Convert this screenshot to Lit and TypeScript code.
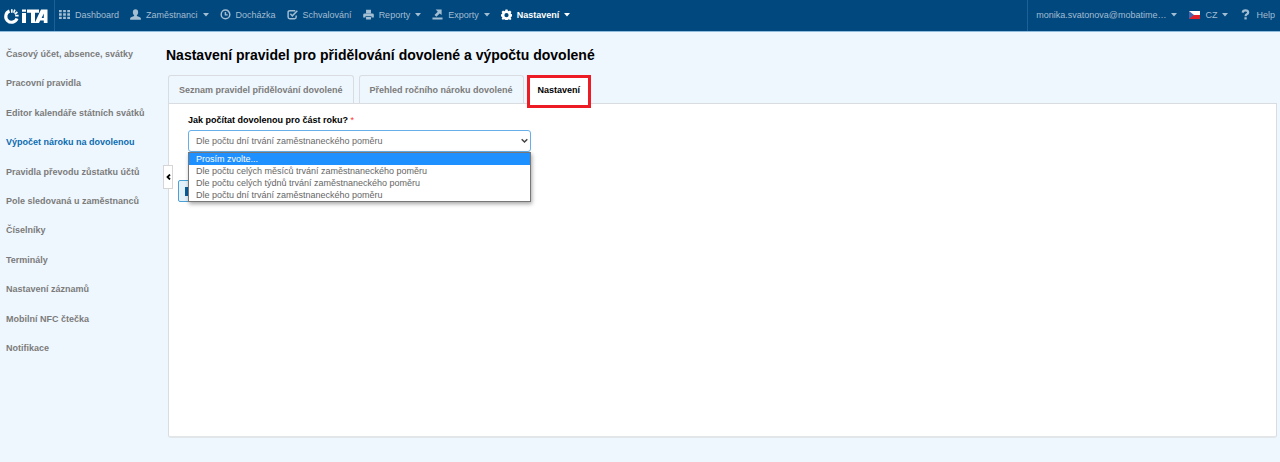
import { LitElement, html, svg, css } from "lit";
import { customElement, property, state } from "lit/decorators.js";
import { classMap } from "lit/directives/class-map.js";

const icons: Record<string, unknown> = {
  grid: svg`<path d="M0 1h3v2.6H0zM4.5 1h3v2.6h-3zM9 1h3v2.6H9zM0 4.7h3v2.6H0zM4.5 4.7h3v2.6h-3zM9 4.7h3v2.6H9zM0 8.4h3V11H0zM4.5 8.4h3V11h-3zM9 8.4h3V11H9z"/>`,
  user: svg`<path d="M6 .3c1.900 0 2.900 1.300 2.900 3.200 0 1.500-.6 2.700-1.400 3.300v.9c1.700.7 4.100 1.200 4.400 2.700V11.700H.1v-1.300c.3-1.500 2.700-2 4.400-2.700v-.9C3.700 6.200 3.100 5 3.100 3.500 3.100 1.600 4.100.3 6 .3z"/>`,
  clock: svg`<path fill="none" stroke="currentColor" stroke-width="1.600" d="M6 1.200a4.700 4.700 0 1 1 0 9.400 4.700 4.700 0 0 1 0-9.400zM5.900 3.200v3.200h2.500"/>`,
  check: svg`<path fill="none" stroke="currentColor" stroke-width="1.600" d="M9 1.800H3.200Q1.200 1.800 1.200 3.600v5.200q0 1.800 1.800 1.800h5.200q1.800 0 1.800-1.800V7M3.700 5.200l2.100 2.300L11.300 2"/>`,
  print: svg`<path d="M3.300.8h5.400v3.700H3.300zM1.800 5h8.400Q11.800 5 11.800 6.400v3H9.300V8H2.700v1.400H.2v-3Q.2 5 1.800 5zM3.300 8.600h5.400v2.800H3.300z"/>`,
  share: svg`<path d="M.5 9.300h11v2.200H.5zM4 .6h6.500v6L8.400 4.900 4.800 8.400 2.700 6.600 6.300 3z"/>`,
  gear: svg`<path fill-rule="evenodd" d="M4.900.5h2.200l.4 1.500 1 .4 1.300-.8 1.600 1.600-.8 1.300.4 1 1.300.4v2.200L11 8.500l-.4 1 .8 1.300-1.300 1.200-1.600-.8-1 .4-.4 1H4.900l-.4-1-1-.4-1.600.6L.7 10.600l.7-1.200-.4-1L0 8.100V5.900l1-.4.4-1-.8-1.300 1.600-1.600 1.300.8 1-.4zM6 4.400a2.300 2.300 0 1 0 0 4.600 2.300 2.300 0 0 0 0-4.600z"/>`,
  help: svg`<path fill="none" stroke="currentColor" stroke-width="2.400" d="M3 4Q3.200 1.600 6 1.600t2.900 2.100Q8.900 5 7.400 5.700 6.100 6.300 6.100 7.900"/><path d="M4.800 9h2.500v2.400H4.800z"/>`,
};

interface NavItem {
  icon: string;
  label: string;
  menu?: boolean;
  active?: boolean;
}

const NAV: NavItem[] = [
  { icon: "grid", label: "Dashboard" },
  { icon: "user", label: "Zaměstnanci", menu: true },
  { icon: "clock", label: "Docházka" },
  { icon: "check", label: "Schvalování" },
  { icon: "print", label: "Reporty", menu: true },
  { icon: "share", label: "Exporty", menu: true },
  { icon: "gear", label: "Nastavení", menu: true, active: true },
];

const SIDEBAR = [
  "Časový účet, absence, svátky",
  "Pracovní pravidla",
  "Editor kalendáře státních svátků",
  "Výpočet nároku na dovolenou",
  "Pravidla převodu zůstatku účtů",
  "Pole sledovaná u zaměstnanců",
  "Číselníky",
  "Terminály",
  "Nastavení záznamů",
  "Mobilní NFC čtečka",
  "Notifikace",
];

const TABS = [
  "Seznam pravidel přidělování dovolené",
  "Přehled ročního nároku dovolené",
  "Nastavení",
];

const OPTIONS = [
  "Prosím zvolte...",
  "Dle počtu celých měsíců trvání zaměstnaneckého poměru",
  "Dle počtu celých týdnů trvání zaměstnaneckého poměru",
  "Dle počtu dní trvání zaměstnaneckého poměru",
];

const caret = html`<svg class="caret" viewBox="0 0 6 4" aria-hidden="true"><path d="M0 0h6L3 3.500z" fill="currentColor" /></svg>`;
const icon = (name: string) =>
  html`<svg class="icon" viewBox="0 0 12 12" fill="currentColor" aria-hidden="true">${icons[name]}</svg>`;

@customElement("top-bar")
class TopBar extends LitElement {
  static styles = css`
    :host {
      display: flex;
      height: 31px;
      background: #00487d;
      border-bottom: 1px solid #8fbbdc;
      color: #a3bdd3;
      font-size: 9px;
      line-height: 12px;
    }
    .brand {
      display: flex;
      align-items: center;
      width: 55px;
      box-sizing: border-box;
      padding-left: 3px;
      border-right: 1px solid #1d5f97;
    }
    .logo { width: 46px; height: 18px; }
    .items { display: flex; align-items: center; flex: 1; padding: 0 0 2px 4px; gap: 11px; }
    .right { display: flex; align-items: center; gap: 12px; padding: 0 5px 2px 8px; border-left: 1px solid #1d5f97; }
    .link {
      display: flex;
      align-items: center;
      gap: 5px;
      padding: 0;
      border: 0;
      background: none;
      color: inherit;
      font: inherit;
      text-decoration: none;
      white-space: nowrap;
    }
    .active { color: #fff; font-weight: bold; }
    .icon { width: 11px; height: 11px; }
    .caret { width: 6px; height: 4px; }
    .flag { width: 11px; height: 8px; }
  `;

  render() {
    return html`
      <a class="brand" href="#" aria-label="iTA">
        <svg class="logo" viewBox="0 0 46 18" aria-hidden="true">
          <path fill="none" stroke="#fff" stroke-width="3.200" d="M6.500 4A5.800 5.800 0 1 0 14 11.500" />
          <path fill="none" stroke="#fff" stroke-width="1.700" d="M8.800 2.200v3.600M11.900 2.600l-1.200 3.200M14.400 5l-2.700 2.200M15.600 8.700h-3.400" />
          <path fill="#fff" d="M19 2.500h4v2.300h-4zM19 6h4v10h-4zM24 2.500h12v3.200h-4V16h-4V5.700h-4zM38 2.500h6.500V16h-3.700v-2.500h-3.600L36 16h-4.300zM40.800 6.500l-2.200 4.400h2.200z" />
        </svg>
      </a>
      <nav class="items">
        ${NAV.map((n) =>
          n.menu
            ? html`<button class=${classMap({ link: true, active: !!n.active })} aria-haspopup="true">${icon(n.icon)}<span>${n.label}</span>${caret}</button>`
            : html`<a class="link" href="#">${icon(n.icon)}<span>${n.label}</span></a>`
        )}
      </nav>
      <div class="right">
        <button class="link"><span>monika.svatonova@mobatime…</span>${caret}</button>
        <button class="link">
          <svg class="flag" viewBox="0 0 11 8" aria-hidden="true"><path fill="#fff" d="M0 0h11v4H0z" /><path fill="#e0202b" d="M0 4h11v4H0z" /><path fill="#4564ae" d="M0 0l5 4-5 4z" /></svg>
          <span>CZ</span>${caret}
        </button>
        <a class="link" href="#">${icon("help")}<span>Help</span></a>
      </div>
    `;
  }
}

@customElement("rule-select")
class RuleSelect extends LitElement {
  @property({ type: Number }) selected = 3;
  @state() private highlighted = 0;

  static styles = css`
    :host { display: block; position: relative; max-width: 343px; }
    .label { display: block; margin-bottom: 4px; color: #000; font-weight: bold; line-height: 12px; }
    .required { color: #f33; font-weight: normal; }
    .box { position: relative; }
    .select {
      display: block;
      width: 100%;
      height: 22px;
      box-sizing: border-box;
      padding: 0 7px;
      appearance: none;
      border: 1px solid #66afe9;
      border-radius: 3px;
      outline: none;
      background: #fff;
      color: #6a6a6a;
      font: inherit;
    }
    .chevron { position: absolute; right: 3px; top: 8px; width: 7px; height: 6px; pointer-events: none; }
    .menu {
      position: absolute;
      z-index: 2;
      top: 100%;
      left: 0;
      right: 0;
      margin: 0;
      padding: 0;
      list-style: none;
      border: 1px solid #777;
      background: #fff;
      color: #666;
      box-shadow: 1px 2px 4px rgba(0, 0, 0, 0.35);
    }
    .option { padding: 0 7px; line-height: 12px; }
    .highlighted { background: #1e90ff; color: #fff; }
  `;

  render() {
    return html`
      <label class="label" for="rule">Jak počítat dovolenou pro část roku? <span class="required">*</span></label>
      <div class="box">
        <select id="rule" class="select" required>
          ${OPTIONS.map((o, i) => html`<option ?selected=${i === this.selected}>${o}</option>`)}
        </select>
        <svg class="chevron" viewBox="0 0 7 6" aria-hidden="true"><path d="M.7 1.200l2.800 2.800 2.800-2.800" fill="none" stroke="#444" stroke-width="1.500" /></svg>
      </div>
      <ul class="menu" role="listbox" aria-label="Jak počítat dovolenou pro část roku?">
        ${OPTIONS.map(
          (o, i) => html`<li
            class=${classMap({ option: true, highlighted: i === this.highlighted })}
            role="option"
            aria-selected=${i === this.selected}
            @mouseenter=${() => (this.highlighted = i)}
          >${o}</li>`
        )}
      </ul>
    `;
  }
}

@customElement("app-root")
class AppRoot extends LitElement {
  @state() private tab = 2;

  static styles = css`
    :host {
      display: flex;
      flex-direction: column;
      min-height: 100vh;
      background: #eff7fe;
      font: 9px/12px "Liberation Sans", Arial, sans-serif;
    }
    .layout { display: flex; flex: 1; }
    .sidebar { display: flex; width: 168px; flex: none; padding: 16px 0 108px 6px; box-sizing: border-box; }
    .menu {
      display: flex;
      flex-direction: column;
      justify-content: space-between;
      margin: 0;
      padding: 0;
      list-style: none;
      white-space: nowrap;
    }
    .entry { display: block; color: #7b7b7b; font-weight: bold; text-decoration: none; }
    .current { color: #0a6cb0; }
    .content { display: flex; flex-direction: column; flex: 1; min-width: 0; padding: 14px 3px 24px 0; }
    .title { margin: 0 0 11px -2px; color: #000; font-size: 14px; line-height: 18px; }
    .tabs { display: flex; gap: 5px; }
    .tab {
      height: 28px;
      box-sizing: border-box;
      padding: 0 10px;
      border: 1px solid #d9dde1;
      border-bottom: 0;
      border-radius: 3px 3px 0 0;
      background: #eff7fe;
      color: #7b7b7b;
      font: inherit;
      font-weight: bold;
    }
    .tab-active {
      position: relative;
      z-index: 1;
      margin-bottom: -1px;
      height: 29px;
      padding: 0 8px;
      background: #fff;
      color: #000;
    }
    .tab-active::after {
      content: "";
      position: absolute;
      inset: -1px -3px -4px;
      border: 3px solid #ed1c24;
    }
    .panel {
      position: relative;
      flex: 1;
      padding: 10px 19px;
      border: 1px solid #d9dde1;
      border-bottom: 2px solid #e3e6e8;
      border-radius: 0 0 3px 3px;
      background: #fff;
    }
    .collapse {
      position: absolute;
      top: 61px;
      left: -6px;
      width: 10px;
      height: 24px;
      padding: 0;
      border: 1px solid #d5d5d5;
      background: #fff;
      display: grid;
      place-items: center;
    }
    .collapse-icon { width: 5px; height: 6px; }
    .save {
      display: flex;
      align-items: center;
      height: 22px;
      margin: 28px 0 0 -10px;
      padding: 0 6px;
      border: 1px solid #4ba0d4;
      border-radius: 2px;
      background: #e4f1fa;
      color: #0a6cb0;
      font: inherit;
    }
    .save-icon { width: 9px; height: 9px; }
  `;

  render() {
    return html`
      <top-bar></top-bar>
      <div class="layout">
        <aside class="sidebar">
          <ul class="menu">
            ${SIDEBAR.map(
              (s, i) => html`<li><a class=${classMap({ entry: true, current: i === 3 })} href="#">${s}</a></li>`
            )}
          </ul>
        </aside>
        <main class="content">
          <h1 class="title">Nastavení pravidel pro přidělování dovolené a výpočtu dovolené</h1>
          <div class="tabs" role="tablist">
            ${TABS.map(
              (t, i) => html`<button
                class=${classMap({ tab: true, "tab-active": i === this.tab })}
                role="tab"
                aria-selected=${i === this.tab}
                @click=${() => (this.tab = i)}
              >${t}</button>`
            )}
          </div>
          <section class="panel" role="tabpanel">
            <button class="collapse" aria-label="Skrýt menu">
              <svg class="collapse-icon" viewBox="0 0 5 6" aria-hidden="true"><path d="M4 .5L1.500 3 4 5.500" fill="none" stroke="#000" stroke-width="1.800" /></svg>
            </button>
            <rule-select></rule-select>
            <button class="save" aria-label="Uložit">
              <svg class="save-icon" viewBox="0 0 9 9" aria-hidden="true"><path fill="#0a5c9c" fill-rule="evenodd" d="M0 0h7.500L9 1.500V9H0zM3 1v2.500h3V1zM3 6.500V8h4V6.500z" /></svg>
            </button>
          </section>
        </main>
      </div>
    `;
  }
}
